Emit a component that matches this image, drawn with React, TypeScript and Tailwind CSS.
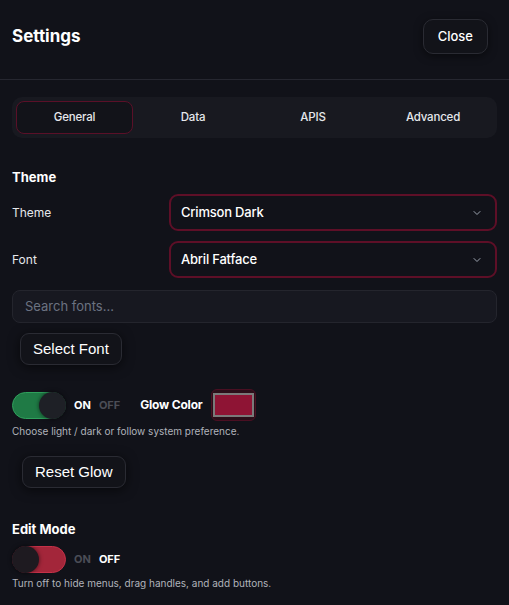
import React from "react";

function Chevron() {
  return (
    <svg width="12" height="12" viewBox="0 0 24 24" fill="none" stroke="#9ca3af" strokeWidth="2" strokeLinecap="round" strokeLinejoin="round">
      <path d="m6 9 6 6 6-6" />
    </svg>
  );
}

export default function App() {
  return (
    <div className="w-[509px] h-[605px] bg-[#111219] text-[#e5e7eb] overflow-hidden" style={{ fontFamily: "Inter, 'Noto Sans', sans-serif" }}>
      <div className="flex items-center justify-between h-[80px] pl-[12px] pr-[21px] pb-[6px] border-b border-[#262730]">
        <h1 className="text-[17px] font-bold text-white">Settings</h1>
        <button className="h-[35px] px-[14px] rounded-[10px] border border-[#2a2b33] bg-[#121319] text-[13px] font-medium text-white shadow-[0_2px_8px_rgba(0,0,0,0.5)]">Close</button>
      </div>

      <div className="px-[12px] pt-[17px]">
        <div className="flex h-[41px] p-[4px] rounded-[10px] bg-[#181920]">
          <div className="w-[117px] flex items-center justify-center rounded-[8px] border border-[#5a1028] bg-[#121319] text-[11.5px] font-medium tracking-[-0.2px]">General</div>
          <div className="flex-1 flex items-center justify-center text-[11.5px] font-medium tracking-[-0.2px]">Data</div>
          <div className="flex-1 flex items-center justify-center text-[11.5px] font-medium tracking-[-0.2px]">APIS</div>
          <div className="flex-1 flex items-center justify-center text-[11.5px] font-medium tracking-[-0.2px]">Advanced</div>
        </div>

        <div className="mt-[31px] text-[13px] font-bold text-white leading-[16px]">Theme</div>

        <div className="flex items-center mt-[9px]">
          <div className="w-[157px] text-[12px]">Theme</div>
          <div className="flex-1 h-[37px] flex items-center justify-between pl-[10px] pr-[12px] rounded-[9px] border-2 border-[#5e0f27] bg-[#111219]">
            <span className="text-[13px] font-medium text-white tracking-[-0.2px]">Crimson Dark</span>
            <Chevron />
          </div>
        </div>
        <div className="flex items-center mt-[10px]">
          <div className="w-[157px] text-[12px]">Font</div>
          <div className="flex-1 h-[37px] flex items-center justify-between pl-[10px] pr-[12px] rounded-[9px] border-2 border-[#5e0f27] bg-[#111219]">
            <span className="text-[13px] font-medium text-white tracking-[-0.2px]">Abril Fatface</span>
            <Chevron />
          </div>
        </div>

        <div className="mt-[12px] h-[33px] flex items-center px-[12px] rounded-[8px] border border-[#24252d] bg-[#171820] text-[13px] text-[#6b7280]">Search fonts...</div>

        <button className="mt-[10px] ml-[8px] h-[32px] px-[12px] rounded-[9px] border border-[#2a2b33] bg-[#121319] text-[15px] text-white shadow-[0_2px_12px_rgba(0,0,0,0.6)]" style={{ fontFamily: "'Liberation Sans', Arial, sans-serif" }}>Select Font</button>

        <div className="flex items-center mt-[24px]">
          <div className="relative w-[54px] h-[27px] rounded-full bg-[#1f7a45] border border-[#2fa05c]">
            <div className="absolute right-[-1px] top-[-1px] w-[27px] h-[27px] rounded-full bg-[#1e2026] shadow-[0_0_4px_rgba(0,0,0,0.6)]" />
          </div>
          <span className="ml-[8px] text-[11px] font-bold text-white">ON</span>
          <span className="ml-[8px] text-[11px] font-bold text-[#4b4d56]">OFF</span>
          <span className="ml-[20px] text-[12px] font-bold text-white tracking-[-0.2px]">Glow Color</span>
          <div className="ml-[8px] w-[45px] h-[32px] rounded-[6px] bg-[#2a0f19] border border-[#4a0f22] flex items-center justify-center">
            <div className="w-[41px] h-[24px] bg-[#8e1434] border-2 border-[#7a7a7a]" />
          </div>
        </div>
        <div className="mt-[3px] text-[10px] text-[#b0b3bb]">Choose light / dark or follow system preference.</div>

        <button className="mt-[17px] ml-[10px] h-[32px] px-[12px] rounded-[9px] border border-[#2a2b33] bg-[#121319] text-[15px] text-white shadow-[0_2px_12px_rgba(0,0,0,0.6)]" style={{ fontFamily: "'Liberation Sans', Arial, sans-serif" }}>Reset Glow</button>

        <div className="mt-[33px] text-[13px] font-bold text-white leading-[16px]">Edit Mode</div>
        <div className="flex items-center mt-[9px]">
          <div className="relative w-[54px] h-[27px] rounded-full bg-[#a3263a] border border-[#c53148]">
            <div className="absolute left-[-1px] top-[-1px] w-[27px] h-[27px] rounded-full bg-[#1e1a20] shadow-[0_0_4px_rgba(0,0,0,0.6)]" />
          </div>
          <span className="ml-[8px] text-[11px] font-bold text-[#4b4d56]">ON</span>
          <span className="ml-[8px] text-[11px] font-bold text-white">OFF</span>
        </div>
        <div className="mt-[3px] text-[10px] text-[#b0b3bb]">Turn off to hide menus, drag handles, and add buttons.</div>
      </div>
    </div>
  );
}
